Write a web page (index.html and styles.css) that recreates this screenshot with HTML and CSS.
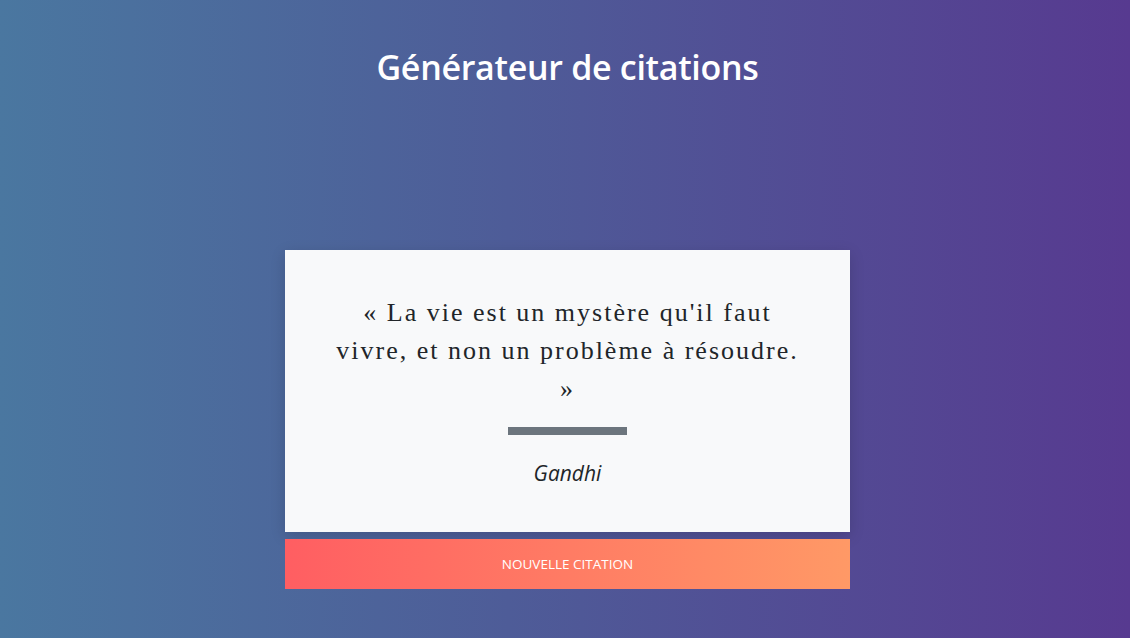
FILE: index.html
```html
<!DOCTYPE html>
<html lang="fr">
<head>
<meta charset="utf-8">
<title>Générateur de citations</title>
<link rel="stylesheet" href="styles.css">
</head>
<body>
  <header class="header">
    <h1 class="title">Générateur de citations</h1>
  </header>
  <main class="main">
    <section class="card">
      <p class="quote">« La vie est un mystère qu'il faut vivre, et non un problème à résoudre. »</p>
      <div class="divider"></div>
      <p class="author">Gandhi</p>
    </section>
    <button class="btn" type="button">Nouvelle citation</button>
  </main>
</body>
</html>
```
FILE: styles.css
```css
* { box-sizing: border-box; }
html, body { height: 100%; }
body {
  margin: 0;
  padding-left: 5px;
  font-family: "Open Sans", "Noto Sans", sans-serif;
  background: linear-gradient(to right, #4a77a0 0%, #4e5c98 45%, #573a90 100%);
  color: #212529;
  display: flex;
  flex-direction: column;
  align-items: center;
}
.header {
  padding-top: 43px;
}
.title {
  margin: 0;
  color: #fff;
  font-family: "Open Sans", sans-serif;
  font-weight: 600;
  font-size: 34px;
  line-height: 48px;
  letter-spacing: -0.3px;
}
.main {
  margin-top: 159px;
  width: 565px;
  display: flex;
  flex-direction: column;
  gap: 7px;
}
.card {
  background: #f8f9fa;
  padding: 44px 46px 43px;
  text-align: center;
  box-shadow: 0 4px 14px rgba(0, 0, 0, 0.15);
  display: flex;
  flex-direction: column;
  align-items: center;
}
.quote {
  margin: 0;
  font-family: "Liberation Serif", "Times New Roman", serif;
  font-size: 26px;
  letter-spacing: 2px;
  line-height: 38px;
  color: #212529;
}
.divider {
  width: 119px;
  height: 8px;
  background: #6c757d;
  margin-top: 19px;
}
.author {
  margin: 22px 0 0;
  font-style: italic;
  font-size: 21px;
  line-height: 32px;
  color: #212529;
}
.btn {
  height: 50px;
  border: 0;
  background: linear-gradient(to right, #ff5e62, #ff9966);
  color: #fff;
  font-family: "Open Sans", sans-serif;
  font-size: 13.5px;
  text-transform: uppercase;
  cursor: pointer;
}
```
